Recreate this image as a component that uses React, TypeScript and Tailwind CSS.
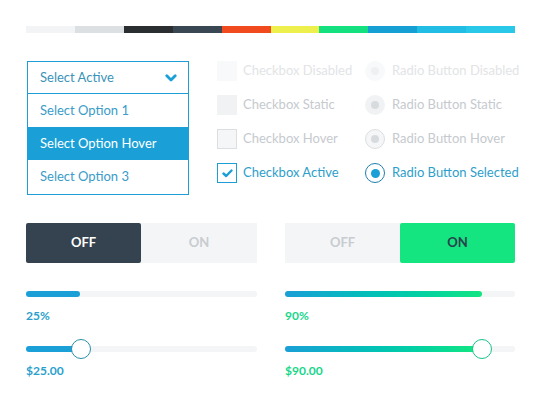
import React from "react";

const barColors = [
  "bg-[#f3f4f5]",
  "bg-[#dde0e3]",
  "bg-[#2b2e30]",
  "bg-[#394752]",
  "bg-[#f24a1f]",
  "bg-[#edef4c]",
  "bg-[#14e07f]",
  "bg-[#159fd2]",
  "bg-[#22bde4]",
  "bg-[#2ac8e8]",
];

function Check() {
  return (
    <svg width="11" height="9" viewBox="0 0 11 9">
      <polyline points="1.5,4.5 4.2,7 9.5,1.5" fill="none" stroke="#1a9fd6" strokeWidth="2.4" strokeLinecap="round" strokeLinejoin="round" />
    </svg>
  );
}

export default function App() {
  return (
    <div className="w-[540px] h-[405px] bg-white pt-[26px] px-[26px] overflow-hidden" style={{ fontFamily: "Lato, 'Open Sans', sans-serif" }}>
      <div className="flex h-[7px] w-[489px]">
        {barColors.map((c, i) => (
          <div key={i} className={`flex-1 ${c}`} />
        ))}
      </div>

      <div className="mt-[28px] flex h-[134px] whitespace-nowrap">
        {/* Dropdown */}
        <div className="ml-[1px] w-[162px] shrink-0 border border-[#1d9fd5] flex flex-col text-[13px] text-[#3a9cc7]">
          <div className="h-[32px] border-b border-[#1d9fd5] flex items-center justify-between pl-[12px] pr-[11px] text-[#3b93b8]">
            <span>Select Active</span>
            <svg width="12" height="8" viewBox="0 0 12 8">
              <polyline points="1.8,1.8 6,6 10.2,1.8" fill="none" stroke="#1a9fd6" strokeWidth="2.8" strokeLinecap="round" strokeLinejoin="round" />
            </svg>
          </div>
          <div className="h-[33px] flex items-center pl-[12px]">Select Option 1</div>
          <div className="h-[33px] flex items-center pl-[12px] bg-[#1a9fd6] text-white">Select Option Hover</div>
          <div className="h-[33px] flex items-center pl-[12px]">Select Option 3</div>
        </div>

        {/* Checkboxes */}
        <div className="ml-[28px] w-[148px] shrink-0 flex flex-col gap-[14px] text-[13px]">
          <div className="flex items-center h-[20px] gap-[6px]">
            <div className="w-[20px] h-[20px] shrink-0 bg-[#f8f9fa]" />
            <span className="text-[#e2e4e6]">Checkbox Disabled</span>
          </div>
          <div className="flex items-center h-[20px] gap-[6px]">
            <div className="w-[20px] h-[20px] shrink-0 bg-[#f1f2f3]" />
            <span className="text-[#c6cace]">Checkbox Static</span>
          </div>
          <div className="flex items-center h-[20px] gap-[6px]">
            <div className="w-[20px] h-[20px] shrink-0 bg-[#f5f6f7] border-[1.5px] border-[#dcdfe2]" />
            <span className="text-[#c6cace]">Checkbox Hover</span>
          </div>
          <div className="flex items-center h-[20px] gap-[6px]">
            <div className="w-[20px] h-[20px] shrink-0 bg-white border-[1.5px] border-[#1d9fd5] flex items-center justify-center">
              <Check />
            </div>
            <span className="text-[#2e9ecb]">Checkbox Active</span>
          </div>
        </div>

        {/* Radios */}
        <div className="flex flex-col gap-[14px] text-[13px]">
          <div className="flex items-center h-[20px] gap-[7px]">
            <div className="w-[20px] h-[20px] shrink-0 rounded-full bg-[#f8f9fa] flex items-center justify-center">
              <div className="w-[8px] h-[8px] rounded-full bg-[#eff0f1]" />
            </div>
            <span className="text-[#e2e4e6]">Radio Button Disabled</span>
          </div>
          <div className="flex items-center h-[20px] gap-[7px]">
            <div className="w-[20px] h-[20px] shrink-0 rounded-full bg-[#f1f2f3] flex items-center justify-center">
              <div className="w-[8px] h-[8px] rounded-full bg-[#d8dbde]" />
            </div>
            <span className="text-[#c6cace]">Radio Button Static</span>
          </div>
          <div className="flex items-center h-[20px] gap-[7px]">
            <div className="w-[20px] h-[20px] shrink-0 rounded-full bg-[#f5f6f7] border-[1.5px] border-[#dcdfe2] flex items-center justify-center">
              <div className="w-[8px] h-[8px] rounded-full bg-[#d8dbde]" />
            </div>
            <span className="text-[#c6cace]">Radio Button Hover</span>
          </div>
          <div className="flex items-center h-[20px] gap-[7px]">
            <div className="w-[20px] h-[20px] shrink-0 rounded-full bg-white border-[1.5px] border-[#1d7fae] flex items-center justify-center">
              <div className="w-[9px] h-[9px] rounded-full bg-[#1a9fd6]" />
            </div>
            <span className="text-[#2e9ecb]">Radio Button Selected</span>
          </div>
        </div>
      </div>

      <div className="mt-[28px] grid grid-cols-[231px_230px] gap-x-[28px] w-[489px]">
        {/* Left column */}
        <div className="flex flex-col">
          <div className="flex h-[40px] text-[13px] font-bold">
            <div className="w-[115px] bg-[#34434f] rounded-[2px] flex items-center justify-center text-white">OFF</div>
            <div className="flex-1 bg-[#f4f5f7] flex items-center justify-center text-[#c8ccd0]">ON</div>
          </div>
          <div className="mt-[28px] h-[6px] rounded-full bg-[#f4f5f6]">
            <div className="h-full w-[54px] rounded-full bg-[#1a9fd6]" />
          </div>
          <div className="mt-[12px] h-[14px] leading-[14px] text-[12px] font-bold text-[#2b9fcc]">25%</div>
          <div className="mt-[16px] h-[20px] relative flex items-center">
            <div className="w-full h-[6px] rounded-full bg-[#f4f5f6]">
              <div className="h-full w-[50px] rounded-full bg-[#1a9fd6]" />
            </div>
            <div className="absolute left-[45px] top-0 w-[20px] h-[20px] rounded-full bg-white border-[1.5px] border-[#2a8ea8]" />
          </div>
          <div className="mt-[5px] h-[14px] leading-[14px] text-[12px] font-bold text-[#2b9fcc]">$25.00</div>
        </div>

        {/* Right column */}
        <div className="flex flex-col">
          <div className="flex h-[40px] text-[13px] font-bold">
            <div className="w-[115px] bg-[#f4f5f7] flex items-center justify-center text-[#c8ccd0]">OFF</div>
            <div className="flex-1 bg-[#14e581] rounded-[2px] flex items-center justify-center text-[#27424a]">ON</div>
          </div>
          <div className="mt-[28px] h-[6px] rounded-full bg-[#f4f5f6]">
            <div className="h-full w-[197px] rounded-full bg-gradient-to-r from-[#1a9fd6] to-[#13e581]" />
          </div>
          <div className="mt-[12px] h-[14px] leading-[14px] text-[12px] font-bold text-[#17d68a]">90%</div>
          <div className="mt-[16px] h-[20px] relative flex items-center">
            <div className="w-full h-[6px] rounded-full bg-[#f4f5f6]">
              <div className="h-full w-[192px] rounded-full bg-gradient-to-r from-[#1a9fd6] to-[#13e581]" />
            </div>
            <div className="absolute left-[187px] top-0 w-[20px] h-[20px] rounded-full bg-white border-[1.5px] border-[#17c487]" />
          </div>
          <div className="mt-[5px] h-[14px] leading-[14px] text-[12px] font-bold text-[#17d68a]">$90.00</div>
        </div>
      </div>
    </div>
  );
}
